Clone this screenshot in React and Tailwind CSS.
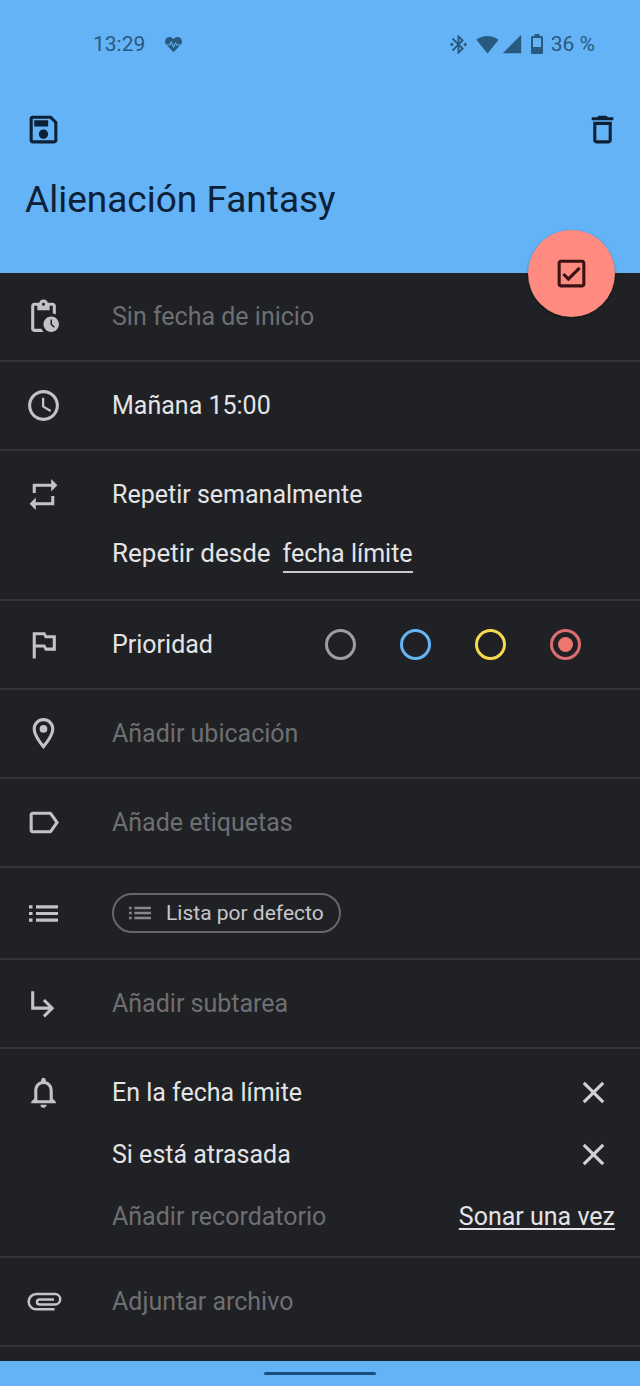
import React, { useState } from 'react';
import clsx from 'clsx';
import { FaHeartbeat } from 'react-icons/fa';
import {
  MdAccessTime,
  MdBluetoothConnected,
  MdClose,
  MdLabelOutline,
  MdNotificationsNone,
  MdOutlineCheckBox,
  MdOutlineDelete,
  MdOutlinedFlag,
  MdOutlinePendingActions,
  MdOutlineSave,
  MdRepeat,
  MdSignalCellular4Bar,
  MdSignalWifi4Bar,
  MdSubdirectoryArrowRight,
} from 'react-icons/md';

const PRIORITIES = [
  { value: 'none', label: 'Sin prioridad', color: 'border-[#9e9ea0] before:bg-[#9e9ea0]' },
  { value: 'low', label: 'Baja', color: 'border-[#64b5f6] before:bg-[#64b5f6]' },
  { value: 'medium', label: 'Media', color: 'border-[#f5d94e] before:bg-[#f5d94e]' },
  { value: 'high', label: 'Alta', color: 'border-[#dc6e72] before:bg-[#ee7671]' },
];

const BatteryIcon = () => (
  <svg width="12" height="20" viewBox="0 0 12 20" fill="currentColor" aria-hidden="true">
    <path
      fillRule="evenodd"
      d="M3.500 0h5v2h2A1.500 1.500 0 0 1 12 3.500v15a1.500 1.500 0 0 1-1.500 1.500h-9A1.500 1.500 0 0 1 0 18.500v-15A1.500 1.500 0 0 1 1.500 2h2zM2 4v9h8V4z"
    />
  </svg>
);

const PlaceIcon = ({ size }) => (
  <svg width={size} height={size} viewBox="0 0 24 24" fill="currentColor" aria-hidden="true">
    <path
      fillRule="evenodd"
      d="M12 2C8.130 2 5 5.130 5 9c0 5.250 7 13 7 13s7-7.750 7-13c0-3.870-3.130-7-7-7zM7 9c0-2.760 2.240-5 5-5s5 2.240 5 5c0 2.880-2.880 7.190-5 9.880C9.920 16.210 7 11.850 7 9z"
    />
    <circle cx="12" cy="9" r="2.500" />
  </svg>
);

const ListIcon = ({ size, className }) => (
  <svg width={size} height={size} viewBox="0 0 37 37" fill="currentColor" className={className} aria-hidden="true">
    <path d="M4 10.200h3.500v3.200H4zM11 10.200h22v3.200H11zM4 16.900h3.500v3.200H4zM11 16.900h22v3.200H11zM4 23.600h3.500v3.200H4zM11 23.600h22v3.200H11z" />
  </svg>
);

const ClipIcon = ({ size }) => (
  <svg
    width={size}
    height={size}
    viewBox="0 0 37 37"
    fill="none"
    stroke="currentColor"
    strokeWidth="2.500"
    aria-hidden="true"
  >
    <path d="M29.500 26.300H11.300a7.650 7.650 0 0 1 0-15.300H30a5.200 5.200 0 0 1 0 10.400H14.500a2.500 2.500 0 0 1 0-5H29" />
  </svg>
);

const StatusBar = () => (
  <div className="flex h-[88px] items-center justify-between pl-[93px] pr-[45px] text-[21px] text-[#28597f]">
    <div className="flex items-center gap-5">
      <span>13:29</span>
      <FaHeartbeat size={17} />
    </div>
    <div className="flex items-center">
      <MdBluetoothConnected size={23} />
      <MdSignalWifi4Bar size={23} className="ml-1.5" />
      <MdSignalCellular4Bar size={22} className="ml-0.5" />
      <span className="ml-2">
        <BatteryIcon />
      </span>
      <span className="ml-2">36 %</span>
    </div>
  </div>
);

const Row = ({ icon: Icon, className, children }) => (
  <section className={clsx('flex gap-[50px] border-b-2 border-[#333437] px-[25px]', className || 'py-7')}>
    <span className="flex h-[31px] shrink-0 items-center text-[#c2c3c6]">
      <Icon size={37} />
    </span>
    <div className="min-w-0 flex-1">{children}</div>
  </section>
);

const Placeholder = ({ children }) => (
  <button type="button" className="block text-left text-[#6e6f73]">
    {children}
  </button>
);

const Priority = () => {
  const [priority, setPriority] = useState('high');

  return (
    <fieldset className="flex items-center justify-between">
      <legend className="float-left">Prioridad</legend>
      <div className="mr-[34px] flex gap-11">
        {PRIORITIES.map((p) => (
          <input
            key={p.value}
            type="radio"
            name="priority"
            aria-label={p.label}
            checked={priority === p.value}
            onChange={() => setPriority(p.value)}
            className={clsx(
              'grid size-[31px] appearance-none place-content-center rounded-full border-3 before:hidden before:size-[15px] before:rounded-full checked:before:block',
              p.color
            )}
          />
        ))}
      </div>
    </fieldset>
  );
};

const Reminders = () => {
  const [reminders, setReminders] = useState(['En la fecha límite', 'Si está atrasada']);

  return (
    <div className="flex flex-col gap-[31px]">
      {reminders.map((name) => (
        <div key={name} className="flex h-[31px] items-center justify-between">
          <span>{name}</span>
          <button
            type="button"
            aria-label="Quitar"
            onClick={() => setReminders(reminders.filter((r) => r !== name))}
            className="mr-[3px] text-[#d0d1d4]"
          >
            <MdClose size={37} />
          </button>
        </div>
      ))}
      <div className="flex items-center justify-between">
        <Placeholder>Añadir recordatorio</Placeholder>
        <button type="button" className="underline decoration-2 underline-offset-3">
          Sonar una vez
        </button>
      </div>
    </div>
  );
};

const App = () => {
  return (
    <div className="flex min-h-screen flex-col bg-[#202124] font-[Roboto,sans-serif] text-[25px] leading-[31px] text-[#e4e4e6]">
      <header className="relative bg-[#64b3f6] pb-[43px] text-[#0c2036]">
        <StatusBar />
        <div className="flex h-[82px] items-center justify-between pl-[25px] pr-[19px]">
          <button type="button" aria-label="Guardar">
            <MdOutlineSave size={37} />
          </button>
          <button type="button" aria-label="Borrar">
            <MdOutlineDelete size={37} />
          </button>
        </div>
        <h1 className="px-[25px] text-[37px] leading-[60px]">Alienación Fantasy</h1>
        <button
          type="button"
          aria-label="Completar"
          className="absolute -bottom-11 right-[25px] flex size-[87px] items-center justify-center rounded-full bg-[#ff8a80] text-[#3a1214] shadow-sm shadow-black/30"
        >
          <MdOutlineCheckBox size={37} />
        </button>
      </header>

      <main className="flex-1">
        <Row icon={MdOutlinePendingActions}>
          <Placeholder>Sin fecha de inicio</Placeholder>
        </Row>
        <Row icon={MdAccessTime}>
          <button type="button" className="block">Mañana 15:00</button>
        </Row>
        <Row icon={MdRepeat} className="pb-[26px] pt-7">
          <div className="flex flex-col items-start gap-7">
            <button type="button">Repetir semanalmente</button>
            <div className="flex items-start gap-3">
              <span className="text-[26px]">Repetir desde</span>
              <button type="button" className="border-b-2 border-[#c8c8ca] pb-0.5">
                fecha límite
              </button>
            </div>
          </div>
        </Row>
        <Row icon={MdOutlinedFlag}>
          <Priority />
        </Row>
        <Row icon={PlaceIcon}>
          <Placeholder>Añadir ubicación</Placeholder>
        </Row>
        <Row icon={MdLabelOutline}>
          <Placeholder>Añade etiquetas</Placeholder>
        </Row>
        <Row icon={ListIcon} className="items-center py-[25px]">
          <button
            type="button"
            className="flex h-10 items-center gap-3 rounded-full border-2 border-[#66676a] pl-3 pr-[15px] text-[21px] text-[#c6c7ca]"
          >
            <ListIcon size={28} className="text-[#86878a]" />
            Lista por defecto
          </button>
        </Row>
        <Row icon={MdSubdirectoryArrowRight}>
          <Placeholder>Añadir subtarea</Placeholder>
        </Row>
        <Row icon={MdNotificationsNone} className="pb-6 pt-7">
          <Reminders />
        </Row>
        <Row icon={ClipIcon}>
          <Placeholder>Adjuntar archivo</Placeholder>
        </Row>
      </main>

      <footer className="flex h-[25px] items-center justify-center bg-[#64b3f6]">
        <span className="h-[3px] w-28 rounded-full bg-[#17507f]" />
      </footer>
    </div>
  );
};

export default App;
